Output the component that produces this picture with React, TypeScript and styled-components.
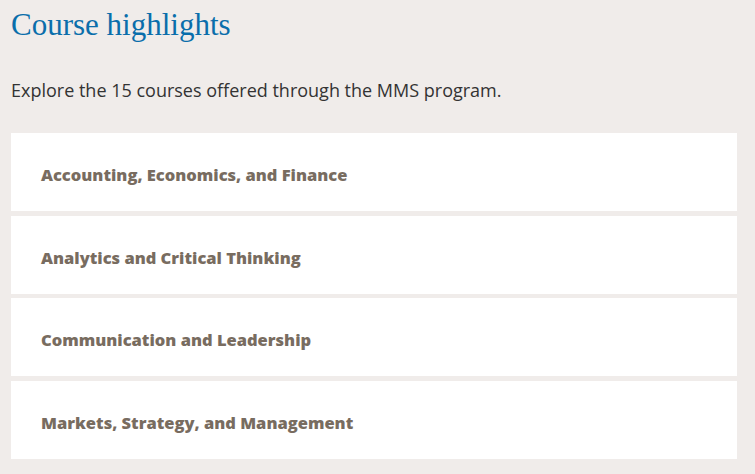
import React from "react";
import styled, { createGlobalStyle } from "styled-components";

const Global = createGlobalStyle`
  html, body { margin: 0; padding: 0; background: #f0ecea; }
  body { width: 755px; height: 474px; overflow: hidden; }
`;

const Page = styled.div`
  padding: 6px 18px 0 11px;
  box-sizing: border-box;
  width: 755px;
`;

const Title = styled.h2`
  margin: 0;
  font-family: "Liberation Serif", "Times New Roman", serif;
  font-weight: 400;
  font-size: 31px;
  line-height: 38px;
  color: #0a6eab;
`;

const Intro = styled.p`
  margin: 34px 0 0;
  font-family: "Open Sans", "Liberation Sans", sans-serif;
  font-size: 18px;
  line-height: 24px;
  color: #333333;
`;

const List = styled.div`
  margin-top: 31px;
  display: flex;
  flex-direction: column;
  gap: 4.67px;
`;

const Item = styled.div`
  height: 78px;
  box-sizing: border-box;
  background: #ffffff;
  display: flex;
  align-items: center;
  padding: 5px 0 0 30px;
  font-family: "Open Sans", "Liberation Sans", sans-serif;
  font-weight: 800;
  font-size: 16.5px;
  color: #786c60;
`;

const items = [
  "Accounting, Economics, and Finance",
  "Analytics and Critical Thinking",
  "Communication and Leadership",
  "Markets, Strategy, and Management",
];

export default function App() {
  return (
    <>
      <Global />
      <Page>
        <Title>Course highlights</Title>
        <Intro>Explore the 15 courses offered through the MMS program.</Intro>
        <List>
          {items.map((t) => (
            <Item key={t}>{t}</Item>
          ))}
        </List>
      </Page>
    </>
  );
}
